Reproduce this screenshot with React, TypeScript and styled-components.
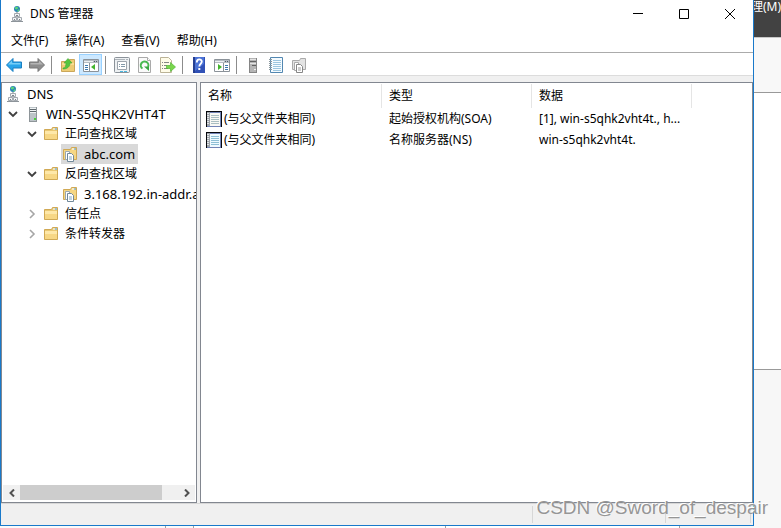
import React from "react";
import styled, { createGlobalStyle } from "styled-components";

const Global = createGlobalStyle`
  * { box-sizing: border-box; }
  body {
    margin: 0;
    background: #f7f7f7;
    color: #000;
    font: 12px/20px "Noto Sans", "Noto Sans CJK SC", sans-serif;
    overflow: hidden;
  }
  button { font: inherit; color: inherit; border: 0; background: none; padding: 0; }
  svg { display: block; flex: none; }
`;

const Desktop = styled.div`
  display: grid;
  grid-template-columns: minmax(0, 1fr) 27px;
  grid-template-rows: minmax(0, 1fr) 2px;
  height: 100vh;
  position: relative;
`;

const Window = styled.main`
  display: flex;
  flex-direction: column;
  background: #fff;
  border: solid #1979ca;
  border-width: 0 1px 1px;
  min-width: 0;
`;

const TitleBar = styled.header`
  display: flex;
  align-items: center;
  height: 27px;
  padding-left: 8px;
`;

const Title = styled.h1`
  flex: 1;
  margin: 0 0 0 5px;
  font-size: 12px;
  line-height: 20px;
  font-weight: 400;
`;

const CaptionButton = styled.button`
  width: 46px;
  height: 27px;
  display: flex;
  align-items: center;
  justify-content: center;
`;

const MenuBar = styled.nav`
  display: flex;
  gap: 1px;
  height: 26px;
  padding: 2px 0 0 2px;
  border-bottom: 1px solid #ababab;
`;

const MenuItem = styled.button`
  padding: 0 8px;
`;

const ToolBar = styled.div`
  display: flex;
  align-items: center;
  height: 23px;
  padding: 1px 0 0 1px;
  border-bottom: 1px solid #dcdcdc;
`;

const ToolButton = styled.button<{ $active?: boolean }>`
  width: 23px;
  height: 21px;
  display: flex;
  align-items: center;
  justify-content: center;
  background: ${(p) => (p.$active ? "#cce8ff" : "transparent")};
  outline: ${(p) => (p.$active ? "1px solid #99d1ff" : "none")};
  outline-offset: -1px;
`;

const ToolSeparator = styled.span`
  width: 8px;
  height: 18px;
  display: flex;
  padding-left: 3px;
  &::before { content: ""; width: 1px; background: #8c8c8c; }
`;

const Content = styled.div`
  flex: 1;
  min-height: 0;
  display: grid;
  grid-template-columns: 196px minmax(0, 1fr);
  gap: 3px;
  padding-top: 6px;
  background: #f0f0f0;
`;

const Pane = styled.section`
  display: flex;
  flex-direction: column;
  min-width: 0;
  background: #fff;
  border: 1px solid #828790;
  padding: 1px 0;
`;

const Tree = styled.ul`
  flex: 1;
  margin: 0;
  padding: 0;
  list-style: none;
  overflow: hidden;
`;

const TreeRow = styled.li<{ $level: number }>`
  display: flex;
  align-items: center;
  height: 20px;
  padding-left: ${(p) => (p.$level ? p.$level * 19 - 17 : 2)}px;
  white-space: nowrap;
`;

const Expander = styled.button`
  width: 19px;
  height: 20px;
  flex: none;
  display: flex;
  align-items: center;
  justify-content: center;
`;

const ExpanderSpace = styled.span`
  width: 19px;
  flex: none;
`;

const TreeItem = styled.button<{ $selected?: boolean }>`
  display: flex;
  align-items: center;
  height: 20px;
  padding-right: 3px;
  background: ${(p) => (p.$selected ? "#d9d9d9" : "transparent")};
`;

const TreeIcon = styled.span`
  width: 20px;
  display: flex;
  padding-left: 1px;
`;

const TreeLabel = styled.span<{ $latin: boolean }>`
  padding-left: 3px;
  font-size: ${(p) => (p.$latin ? 13 : 12)}px;
`;

const ScrollBar = styled.div`
  display: flex;
  align-items: center;
  height: 17px;
  border: 1px solid #fff;
  background: #f0f0f0;
`;

const ScrollArrow = styled.button`
  width: 17px;
  display: flex;
  justify-content: center;
`;

const ScrollTrack = styled.div`
  flex: 1;
  height: 15px;
`;

const ScrollThumb = styled.div`
  width: 90%;
  height: 100%;
  background: #cdcdcd;
`;

const Table = styled.table`
  width: 100%;
  table-layout: fixed;
  border-collapse: separate;
  border-spacing: 0;
`;

const Col = styled.col<{ $width?: number }>`
  width: ${(p) => (p.$width ? `${p.$width}px` : "auto")};
`;

const HeadCell = styled.th`
  height: 24px;
  padding: 0 7px;
  text-align: left;
  font-weight: 400;
  border-right: 1px solid #e5e5e5;
  &:last-child { border-right: 0; }
`;

const Cell = styled.td`
  height: 21px;
  padding: 0 7px;
  white-space: nowrap;
  overflow: hidden;
`;

const RecordName = styled.span`
  display: flex;
  align-items: center;
  gap: 2px;
  margin-left: -2px;
`;

const StatusBar = styled.footer`
  display: grid;
  grid-template-columns: minmax(0, 1fr) 133px 85px 2px;
  height: 22px;
  padding: 2px 0;
  background: #f0f0f0;
  border-top: 1px solid #d7d7d7;
`;

const StatusCell = styled.span`
  border-right: 1px solid #d7d7d7;
  &:last-child { border-right: 0; }
`;

const Behind = styled.aside`
  grid-row: 1 / 3;
  grid-column: 2;
  display: grid;
  grid-template-columns: minmax(0, 1fr);
  grid-template-rows: 38px 55px minmax(0, 277fr) minmax(0, 158fr);
  overflow: hidden;
`;

const BehindMenu = styled.div`
  display: flex;
  justify-content: flex-end;
  background: #424242;
  color: #fff;
  line-height: 13px;
  white-space: nowrap;
  border-bottom: 1px solid #c8c8c8;
  overflow: hidden;
`;

const BehindBlock = styled.div<{ $fill: string; $line?: boolean }>`
  background: ${(p) => p.$fill};
  border-bottom: ${(p) => (p.$line ? "1px solid #999" : "0")};
`;

const BehindBottom = styled.div`
  grid-row: 2;
  grid-column: 1;
  display: grid;
  grid-template-columns: 166px 28px 252px 234px 1fr;
  background: #fafafa;
`;

const BehindColumn = styled.span<{ $fill: string }>`
  background: ${(p) => p.$fill};
  border-right: 1px solid #a0a0a0;
  &:last-child { border-right: 0; }
`;

const Watermark = styled.div`
  position: absolute;
  right: 13px;
  bottom: 8px;
  font: 19px/24px "Liberation Sans", sans-serif;
  color: #969696;
  text-shadow: -1px -1px 0 #fff;
  white-space: nowrap;
  pointer-events: none;
`;

const Icon = ({ children }: { children: React.ReactNode }) => (
  <svg width="16" height="16" viewBox="0 0 16 16" aria-hidden="true">{children}</svg>
);

const DnsIcon = () => (
  <Icon>
    <circle cx="8" cy="3" r="3" fill="#2b83b4" />
    <path d="M6 1.500 8 .5l1.500 1.500-2 1.500L6 3zM8.500 4l2-1-.5 2-1.500.800z" fill="#5bd878" />
    <path d="M8 6v1" stroke="#777e84" />
    <path d="M5.500 7.500h5v3h-5zM3.500 11.500h4v3h-4zM8.500 11.500h4v3h-4z" fill="#f2f4f5" stroke="#a3a9af" />
    <path d="M7 9.500h2M5 13.500h1M10 13.500h1" stroke="#7b8389" />
    <path d="M2 15.500h12" stroke="#8d949a" />
  </Icon>
);

const ServerIcon = () => (
  <Icon>
    <path d="M5 1h8v15H5z" fill="#8e9599" />
    <path d="M6 1h6v14H6z" fill="#bcc4c8" />
    <path d="M6 2h6v1H6zM6 4h6v1H6zM6 6h6v1H6z" fill="#f0f3f4" />
    <path d="M6 3h6v1H6zM6 5h6v1H6z" fill="#5f686d" />
    <path d="M10 12h2v2h-2z" fill="#47d33c" />
  </Icon>
);

const GreyServerIcon = () => (
  <Icon>
    <path d="M4 1h8v15H4z" fill="#858585" />
    <path d="M5 1h6v14H5z" fill="#b5b5b5" />
    <path d="M5 2h6v1H5zM5 6h6v1H5z" fill="#e4e4e4" />
    <path d="M5 4h6v1H5zM7 8h4v1H7z" fill="#626262" />
    <path d="M9 12h2v1H9z" fill="#ededed" />
  </Icon>
);

const FolderIcon = () => (
  <Icon>
    <path d="M1.500 3.500h7l1-2h5v12h-13z" fill="#e9c873" stroke="#d0a955" />
    <path d="M2 5h12v8H2z" fill="#f7d785" />
    <path d="M2 5h12v3H2z" fill="#fee8a9" />
    <path d="M10 3h4" stroke="#fff" />
    <path d="M12 3h2" stroke="#4b9bdc" />
  </Icon>
);

const ZoneIcon = () => (
  <Icon>
    <path d="M1.500 3.500h7l1-2h5v12h-13z" fill="#f5d684" stroke="#d0a955" />
    <path d="M10 3h3" stroke="#fff" />
    <path d="M12 3h2" stroke="#4b9bdc" />
    <path d="M3.500 5.500h4v8h-4z" fill="#fff" stroke="#9aa9b2" />
    <path d="M5.500 7.500h4l2 2v6h-6z" fill="#fff" stroke="#71899a" />
    <path d="M7 11h3M7 13h3" stroke="#82a8c3" />
  </Icon>
);

const ArrowIcon = ({ forward }: { forward?: boolean }) => (
  <Icon>
    <g transform={forward ? "matrix(-1 0 0 1 16 0)" : undefined}>
      <path d="M.5 8 7 1.500V5h8.500v6H7v3.500z" fill={forward ? "#8d8d8d" : "#27a4ea"} stroke={forward ? "#777" : "#1b7fc1"} />
      <path d="M2 7.500 6 3.500V6h8.500v1.500z" fill={forward ? "#b4b4b4" : "#75cdf7"} />
    </g>
  </Icon>
);

const UpFolderIcon = () => (
  <Icon>
    <path d="M1.500 4.500h7l1-2h5v12h-13z" fill="#edcc75" stroke="#cba75a" />
    <path d="M2 6h12v2H2z" fill="#f8dd95" />
    <path d="M3 11c2 0 3-2 3-5H4l4-4.500L12 6h-2c0 4-3 6-7 6z" fill="#53c53e" stroke="#43a735" strokeWidth=".6" />
  </Icon>
);

const PaneIcon = ({ right }: { right?: boolean }) => (
  <Icon>
    <path d="M.5 2.500h15v12H.5z" fill="#fff" stroke="#8b9299" />
    <path d="M1 3h14v3H1z" fill="#b6bdc4" />
    <path d="M1 4.500h9" stroke="#edf0f2" />
    <path d="M11 4.500h1M13 4.500h1" stroke="#4f5d68" />
    <path d={right ? "M9.500 6v8" : "M6.500 6v8"} stroke="#8b9299" />
    <path d={right ? "M11 8.500h3M11 10.500h3M11 12.500h3" : "M2 8.500h3M2 10.500h3M2 12.500h3"} stroke="#3d79b0" />
    <path d={right ? "M4 7v6l4-3z" : "M12 7v6L8 10z"} fill="#43b52e" />
  </Icon>
);

const PropertiesIcon = () => (
  <Icon>
    <rect x=".5" y=".5" width="15" height="15" rx="1" fill="#edf0f2" stroke="#8b9299" />
    <path d="M1 2.500h10M12 2.500h2" stroke="#aeb4ba" />
    <path d="M3.500 4.500h9v8h-9z" fill="#fff" stroke="#9da5ac" />
    <path d="M5 7.500h1M7 7.500h4M5 9.500h1M7 9.500h4" stroke="#8399a8" />
    <path d="M6 14.500h3M10 14.500h3" stroke="#4bb7df" />
  </Icon>
);

const RefreshIcon = () => (
  <Icon>
    <path d="M1.500.5h9l3 3v12h-12z" fill="#fafafa" stroke="#aaa" />
    <path d="M10.500.5v3h3" fill="#fff" stroke="#aaa" />
    <path d="M5.500 11.500A3.800 3.800 0 1 1 11 10" fill="none" stroke="#49b951" strokeWidth="2" />
    <path d="M7 9.500h5v4.500z" fill="#36a741" />
  </Icon>
);

const ExportIcon = () => (
  <Icon>
    <path d="M.5.5h8l3 3v12H.5z" fill="#fffce9" stroke="#bbb397" />
    <path d="M2 5.500h1M4 5.500h5M2 8.500h1M4 8.500h3M2 11.500h1M4 11.500h4" stroke="#858585" />
    <path d="M6.500 8.500h4v-3l5 4.500-5 4.500v-3h-4z" fill="#79d64b" stroke="#55b638" strokeWidth=".7" />
  </Icon>
);

const HelpIcon = () => (
  <Icon>
    <path d="M2 0h12v16H2z" fill="#3151b6" />
    <path d="M2 0h2v16H2z" fill="#263f92" />
    <path d="M4 0h9v7L4 14z" fill="#4b72d5" />
    <path d="M5.800 5.500c0-4 5-3.800 5-.9 0 2.200-2.500 2.200-2.500 4.900" fill="none" stroke="#fff" strokeWidth="1.800" />
    <path d="M7.300 11h2v2h-2z" fill="#fff" />
  </Icon>
);

const NotebookIcon = () => (
  <Icon>
    <path d="M2.500.5h12v15h-12z" fill="#f4fbff" stroke="#5287b1" />
    <path d="M5 3.500h8M5 5.500h8M5 7.500h8M5 9.500h8M5 11.500h8M5 13.500h8" stroke="#9dc6df" />
    <path d="M1 2.500h3M1 4.500h3M1 6.500h3M1 8.500h3M1 10.500h3M1 12.500h3" stroke="#8c999f" />
  </Icon>
);

const GreyZoneIcon = () => (
  <Icon>
    <path d="M1.500 3.500h7l1-2h5v11h-13z" fill="#e3e3e3" stroke="#aaa" />
    <path d="M3.500 5.500h4v8h-4z" fill="#fff" stroke="#aaa" />
    <path d="M5.500 7.500h4l2 2v6h-6z" fill="#fff" stroke="#868686" />
    <path d="M7 11h3M7 13h3" stroke="#9b9b9b" />
  </Icon>
);

const RecordIcon = ({ blue }: { blue?: boolean }) => (
  <Icon>
    <path d="M0 0h16v16H0z" fill="#06080d" />
    <path d="M1 1h14v15H1z" fill="#7284b6" />
    <path d="M4 2h10v13H4z" fill={blue ? "#effaff" : "#f8f8f4"} />
    <path d="M5 4.500h8M5 6.500h8M5 8.500h8M5 10.500h8M5 12.500h8" stroke={blue ? "#8dbfd5" : "#a9bec2"} />
    <path d="M1 1h3v14H1z" fill="#9da3aa" />
    <path d="M1 2.500h2M1 4.500h2M1 6.500h2M1 8.500h2M1 10.500h2M1 12.500h2" stroke="#e1e4e6" />
  </Icon>
);

const ExpandIcon = ({ open }: { open?: boolean }) => (
  <svg width="11" height="10" viewBox="0 0 11 10" aria-hidden="true">
    <path d={open ? "M1 3l4 4 4-4" : "M3 1l4 4-4 4"} fill="none" stroke={open ? "#404040" : "#a6a6a6"} strokeWidth={open ? 1.8 : 1.6} />
  </svg>
);

const ChevronIcon = ({ right }: { right?: boolean }) => (
  <svg width="8" height="8" viewBox="0 0 8 8" aria-hidden="true">
    <path d={right ? "M2 0.500 5.500 4 2 7.500" : "M6 0.500 2.500 4 6 7.500"} fill="none" stroke="#505050" strokeWidth="2" />
  </svg>
);

const captions = [
  { name: "最小化", path: "M0 4.500h10" },
  { name: "最大化", path: "M.5.5h9v9h-9z" },
  { name: "关闭", path: "M0 0l10 10M10 0L0 10" },
];

const toolGroups = [
  [{ name: "后退", icon: <ArrowIcon /> }, { name: "前进", icon: <ArrowIcon forward /> }],
  [{ name: "上一级", icon: <UpFolderIcon /> }, { name: "显示/隐藏控制台树", icon: <PaneIcon />, active: true }],
  [{ name: "属性", icon: <PropertiesIcon /> }, { name: "刷新", icon: <RefreshIcon /> }, { name: "导出列表", icon: <ExportIcon /> }],
  [{ name: "帮助", icon: <HelpIcon /> }, { name: "显示/隐藏操作窗格", icon: <PaneIcon right /> }],
  [{ name: "新建服务器", icon: <GreyServerIcon /> }, { name: "新建记录", icon: <NotebookIcon /> }, { name: "新建区域", icon: <GreyZoneIcon /> }],
] as { name: string; icon: React.ReactNode; active?: boolean }[][];

type Node = { label: string; level: number; icon: React.ReactNode; open?: boolean; selected?: boolean };
const nodes: Node[] = [
  { label: "DNS", level: 0, icon: <DnsIcon /> },
  { label: "WIN-S5QHK2VHT4T", level: 1, icon: <ServerIcon />, open: true },
  { label: "正向查找区域", level: 2, icon: <FolderIcon />, open: true },
  { label: "abc.com", level: 3, icon: <ZoneIcon />, selected: true },
  { label: "反向查找区域", level: 2, icon: <FolderIcon />, open: true },
  { label: "3.168.192.in-addr.a", level: 3, icon: <ZoneIcon /> },
  { label: "信任点", level: 2, icon: <FolderIcon />, open: false },
  { label: "条件转发器", level: 2, icon: <FolderIcon />, open: false },
];

const records = [
  { name: "(与父文件夹相同)", type: "起始授权机构(SOA)", data: "[1], win-s5qhk2vht4t., h..." },
  { name: "(与父文件夹相同)", type: "名称服务器(NS)", data: "win-s5qhk2vht4t." },
];

export default function App() {
  return (
    <Desktop>
      <Global />
      <Window>
        <TitleBar>
          <DnsIcon />
          <Title>DNS 管理器</Title>
          {captions.map((c) => (
            <CaptionButton key={c.name} aria-label={c.name}>
              <svg width="10" height="10" viewBox="0 0 10 10" aria-hidden="true">
                <path d={c.path} fill="none" stroke="#000" />
              </svg>
            </CaptionButton>
          ))}
        </TitleBar>
        <MenuBar>
          {["文件(F)", "操作(A)", "查看(V)", "帮助(H)"].map((m) => <MenuItem key={m}>{m}</MenuItem>)}
        </MenuBar>
        <ToolBar role="toolbar">
          {toolGroups.map((group, i) => (
            <React.Fragment key={i}>
              {i > 0 && <ToolSeparator />}
              {group.map((t) => (
                <ToolButton key={t.name} aria-label={t.name} $active={t.active}>{t.icon}</ToolButton>
              ))}
            </React.Fragment>
          ))}
        </ToolBar>
        <Content>
          <Pane>
            <Tree>
              {nodes.map((n) => (
                <TreeRow key={n.label} $level={n.level}>
                  {n.open !== undefined && (
                    <Expander aria-label={`${n.open ? "折叠" : "展开"} ${n.label}`}><ExpandIcon open={n.open} /></Expander>
                  )}
                  {n.open === undefined && n.level > 0 && <ExpanderSpace />}
                  <TreeItem $selected={n.selected}>
                    <TreeIcon>{n.icon}</TreeIcon>
                    <TreeLabel $latin={/^[\x20-\x7e]+$/.test(n.label)}>{n.label}</TreeLabel>
                  </TreeItem>
                </TreeRow>
              ))}
            </Tree>
            <ScrollBar>
              <ScrollArrow aria-label="向左滚动"><ChevronIcon /></ScrollArrow>
              <ScrollTrack><ScrollThumb /></ScrollTrack>
              <ScrollArrow aria-label="向右滚动"><ChevronIcon right /></ScrollArrow>
            </ScrollBar>
          </Pane>
          <Pane>
            <Table>
              <colgroup><Col $width={181} /><Col $width={150} /><Col $width={160} /><Col /></colgroup>
              <thead>
                <tr><HeadCell>名称</HeadCell><HeadCell>类型</HeadCell><HeadCell>数据</HeadCell><HeadCell /></tr>
              </thead>
              <tbody>
                {records.map((r, i) => (
                  <tr key={r.type}>
                    <Cell><RecordName><RecordIcon blue={i === 1} />{r.name}</RecordName></Cell>
                    <Cell>{r.type}</Cell>
                    <Cell>{r.data}</Cell>
                    <Cell />
                  </tr>
                ))}
              </tbody>
            </Table>
          </Pane>
        </Content>
        <StatusBar><StatusCell /><StatusCell /><StatusCell /><StatusCell /></StatusBar>
      </Window>
      <Behind>
        <BehindMenu>理(M)</BehindMenu>
        <BehindBlock $fill="#f8f8f8" $line />
        <BehindBlock $fill="#fff" $line />
        <BehindBlock $fill="#f7f7f7" />
      </Behind>
      <BehindBottom>
        <BehindColumn $fill="#fafafa" />
        <BehindColumn $fill="#fafafa" />
        <BehindColumn $fill="#fff" />
        <BehindColumn $fill="#fff" />
        <BehindColumn $fill="#f7f7f7" />
      </BehindBottom>
      <Watermark>CSDN @Sword_of_despair</Watermark>
    </Desktop>
  );
}
